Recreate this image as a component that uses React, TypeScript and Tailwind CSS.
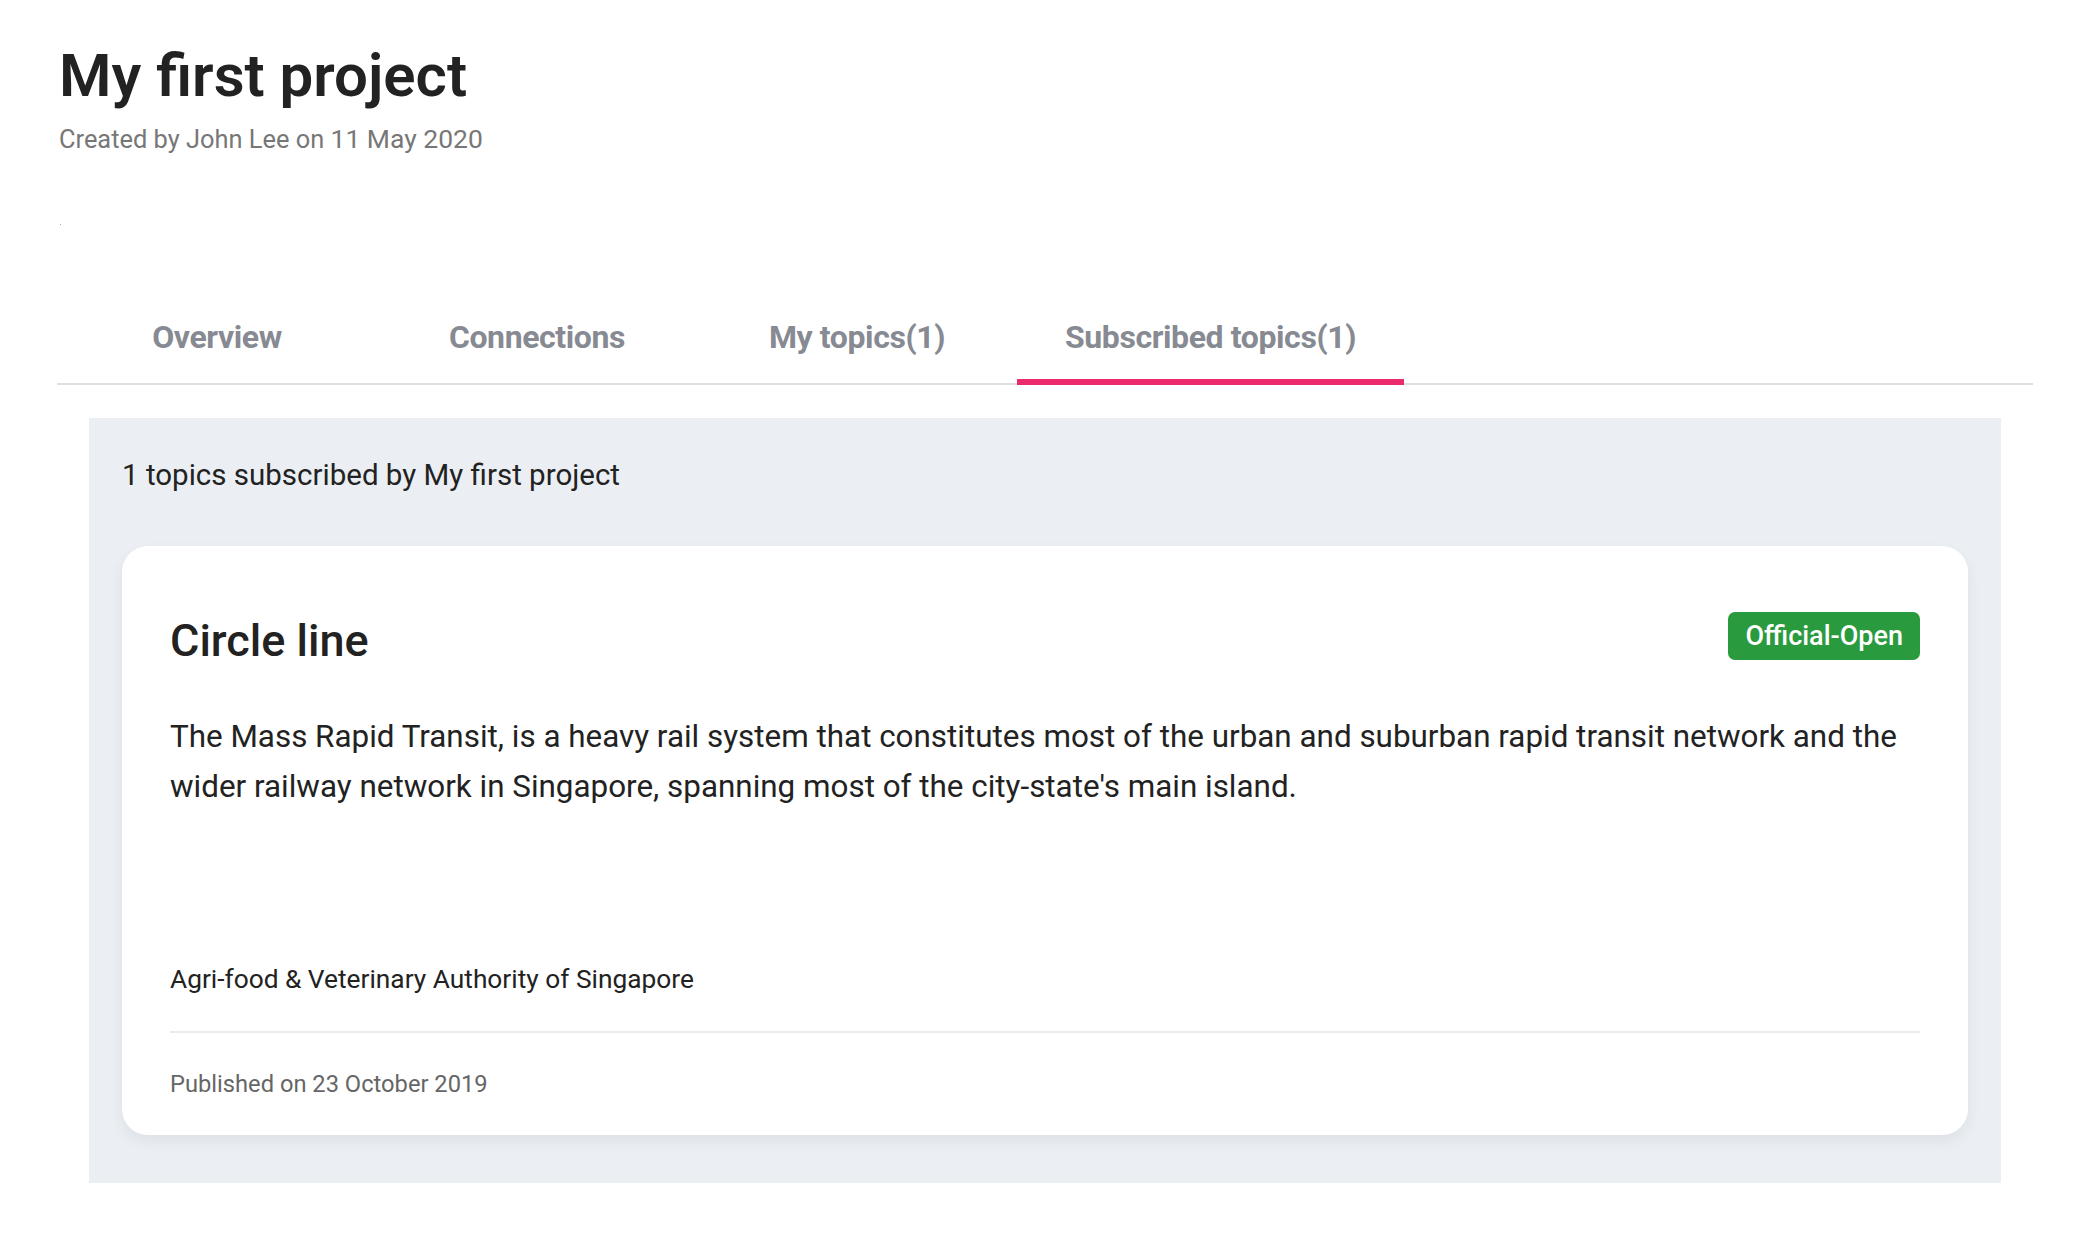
const tabs = [
  { label: "Overview", active: false },
  { label: "Connections", active: false },
  { label: "My topics(1)", active: false },
  { label: "Subscribed topics(1)", active: true },
];

function Tabs() {
  return (
    <div className="flex border-b-2 border-[#dedfe1]">
      {tabs.map((t) => (
        <div
          key={t.label}
          className={
            t.active
              ? "min-w-[320px] px-[48px] pt-[20px] pb-[20px] border-b-[6px] border-[#ea2a6b] -mb-[2px] text-center"
              : "min-w-[320px] px-[48px] pt-[20px] pb-[26px] text-center"
          }
        >
          <span className="text-[32px] leading-[40px] font-bold text-[#878a92] tracking-[-0.4px]">{t.label}</span>
        </div>
      ))}
    </div>
  );
}

function TopicCard() {
  return (
    <div className="bg-white rounded-[26px] shadow-[0_6px_14px_rgba(40,60,90,0.07)] px-[48px] pt-[66px] pb-[35px]">
      <div className="flex items-center justify-between h-[48px]">
        <h2 className="mt-[10px] text-[45px] leading-[48px] font-medium text-[#222]">Circle line</h2>
        <span className="bg-[#2a9a3e] text-white rounded-[7px] h-[48px] px-[17px] flex items-center text-[27px] font-medium">
          Official-Open
        </span>
      </div>
      <p className="mt-[52px] text-[31.4px] leading-[50px] text-[#222]">
        The Mass Rapid Transit, is a heavy rail system that constitutes most of the urban and suburban rapid transit network and the wider railway network in Singapore, spanning most of the city-state's main island.
      </p>
      <div className="mt-[149px] text-[26.3px] leading-[36px] text-[#222]">Agri-food &amp; Veterinary Authority of Singapore</div>
      <div className="mt-[34px] h-[2px] bg-[#ebebeb]" />
      <div className="mt-[35px] text-[23.7px] leading-[32px] text-[#666]">Published on 23 October 2019</div>
    </div>
  );
}

export default function App() {
  return (
    <div className="min-h-screen bg-white font-['Roboto',sans-serif]">
      <div className="pl-[57px] pr-[61px] pt-[40px]">
        <h1 className="pl-[2px] text-[60px] leading-[72px] font-semibold text-[#222]">My first project</h1>
        <p className="pl-[2px] mt-[11px] text-[25.4px] leading-[32px] text-[#777]">
          Created by John Lee on <span className="text-[26.5px]">11 May 2020</span>
        </p>
        <div className="mt-[69px] ml-[3px] w-[1px] h-[1px] bg-[#aaa]" />

        <div className="mt-[72px]">
          <Tabs />
        </div>

        <div className="mt-[33px] mx-[32px] bg-[#ebeff3] px-[33px] pt-[37px] pb-[48px]">
          <div className="text-[29.5px] leading-[40px] text-[#222]">1 topics subscribed by My first project</div>
          <div className="mt-[51px]">
            <TopicCard />
          </div>
        </div>
      </div>
    </div>
  );
}
